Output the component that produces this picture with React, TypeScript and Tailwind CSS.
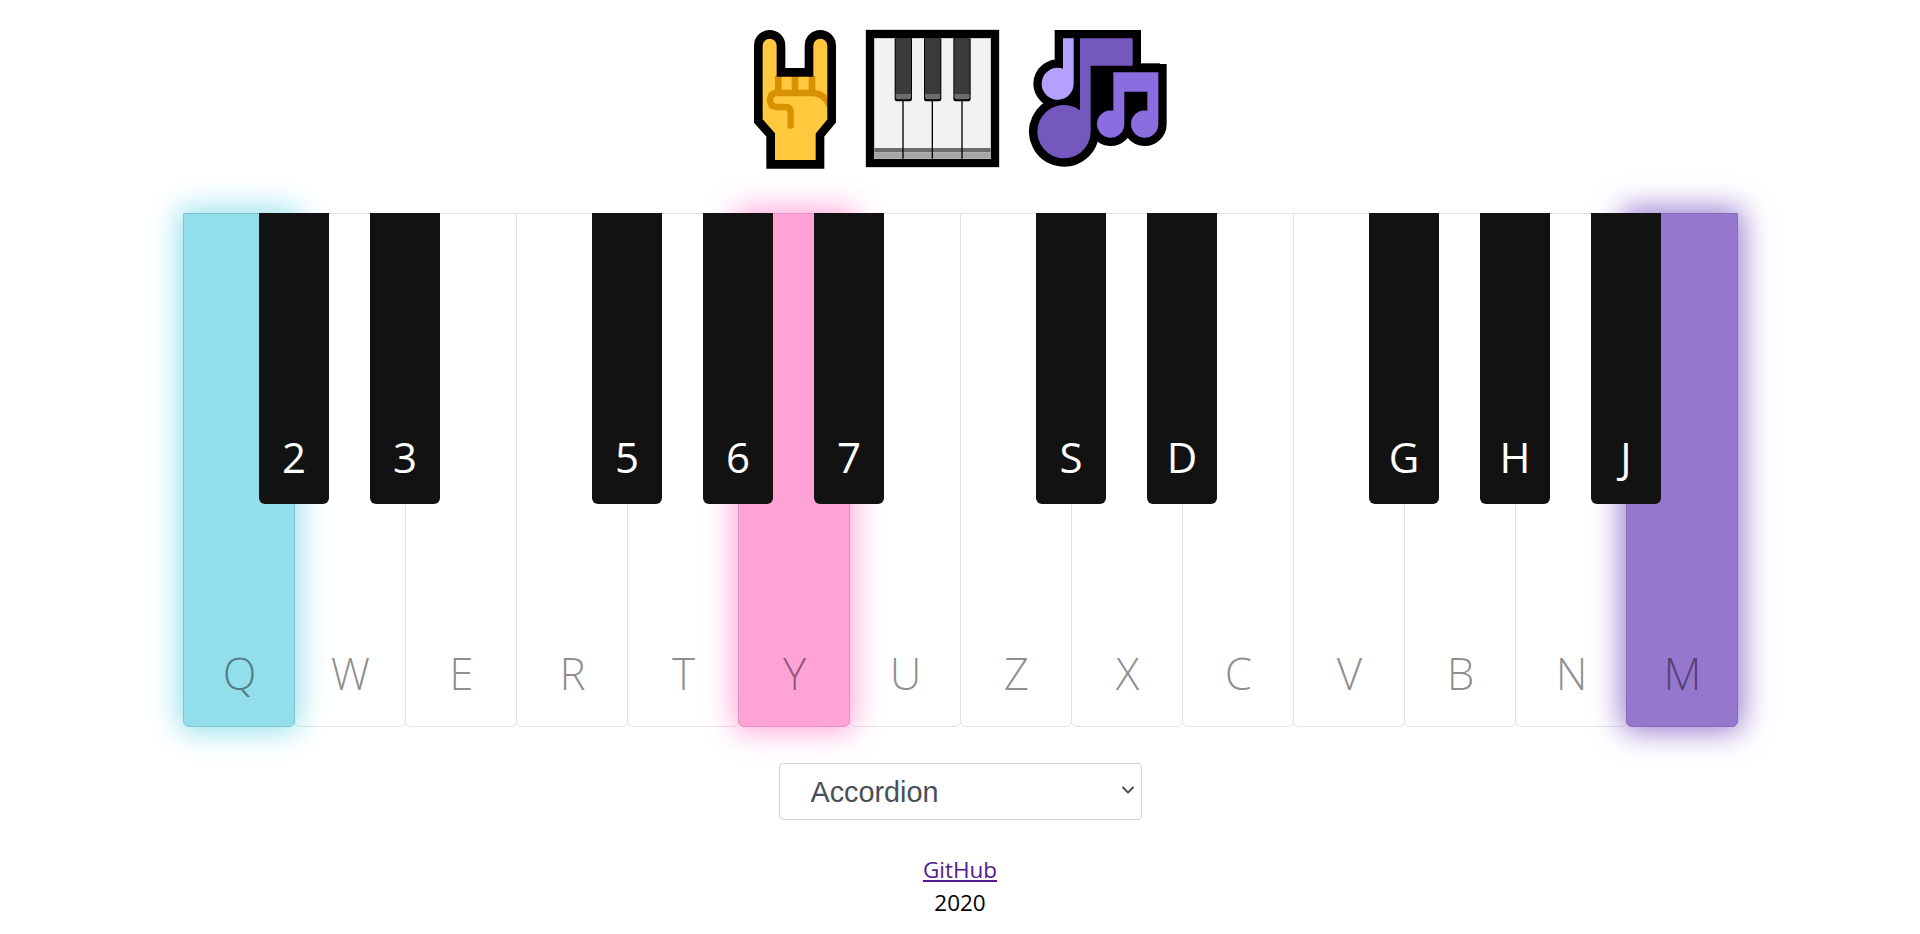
import React from 'react';
import { ChevronDown } from 'lucide-react';

interface PianoKey {
  label: string;
  sharp?: string;
  glow?: string;
}

const keys: PianoKey[] = [
  { label: 'Q', sharp: '2', glow: 'bg-[#92dfeb] border-[#7fc4d0] shadow-[0_0_30px_4px_#92dfeb] z-[1]' },
  { label: 'W', sharp: '3' },
  { label: 'E' },
  { label: 'R', sharp: '5' },
  { label: 'T', sharp: '6' },
  { label: 'Y', sharp: '7', glow: 'bg-[#ffa3d7] border-[#e591c1] shadow-[0_0_30px_4px_#ffa3d7] z-[1]' },
  { label: 'U' },
  { label: 'Z', sharp: 'S' },
  { label: 'X', sharp: 'D' },
  { label: 'C' },
  { label: 'V', sharp: 'G' },
  { label: 'B', sharp: 'H' },
  { label: 'N', sharp: 'J' },
  { label: 'M', glow: 'bg-[#9577ce] border-[#866bb9] shadow-[0_0_30px_4px_#9577ce] z-[1]' },
];

const handOutline = 'M62 418 V330 L25 288 V62 A34 34 0 0 1 93 62 V142 H177 V62 A34 34 0 0 1 245 62 V288 L210 330 V418 Z';

const HandIcon = () => (
  <svg viewBox="0 0 276 435" className="w-[92px] h-[145px]">
    <path d={handOutline} fill="#ffc83d" />
    <path d="M85 153 V204 M135 153 V204 M186 153 V204" stroke="#d89100" strokeWidth="20" fill="none" />
    <path
      d="M122 302 V262 Q122 246 106 246 H80 Q60 246 60 225 Q60 204 80 204 H192 Q225 208 238 240"
      stroke="#d89100"
      strokeWidth="19"
      strokeLinecap="round"
      fill="none"
    />
    <path d={handOutline} fill="none" stroke="#000" strokeWidth="26" />
  </svg>
);

const PianoIcon = () => (
  <svg viewBox="396 45 423 435" className="w-[141px] h-[145px]">
    <rect x="420" y="72" width="375" height="387" fill="#f2f2f2" stroke="#000" strokeWidth="25" />
    <rect x="433" y="414" width="349" height="13" fill="#6d6d6d" />
    <rect x="433" y="427" width="349" height="19" fill="#a6a6a6" />
    <path d="M519 270 V446 M607 270 V446 M696 270 V446" stroke="#000" strokeWidth="4" />
    {[494, 582, 670].map((x) => (
      <g key={x}>
        <path d={`M${x} 85 h52 v182 q0 7 -7 7 h-38 q-7 0 -7 -7 Z`} fill="#000" />
        <rect x={x + 3} y="85" width="46" height="167" fill="#3b3b3b" />
        <path d={`M${x + 3} 252 h46 v10 q0 6 -6 6 h-34 q-6 0 -6 -6 Z`} fill="#6d6d6d" />
      </g>
    ))}
  </svg>
);

const notePaths = [
  { d: 'M165 40 H323 V122 H197 V320 A80 80 0 1 1 165 256 Z', fill: '#7558be' },
  { d: 'M114 40 H146 V176 A48 48 0 1 1 114 131 Z', fill: '#b4a0ff' },
  { d: 'M265 142 H400 V297 A41 41 0 1 1 367 257 V200 H298 V297 A41 41 0 1 1 265 257 Z', fill: '#8b6de0' },
];

const NotesIcon = () => (
  <svg viewBox="0 0 441 435" className="w-[147px] h-[145px]">
    <rect x="190" y="115" width="215" height="175" fill="#000" />
    {notePaths.map((p) => (
      <path key={p.fill} d={p.d} fill="#000" stroke="#000" strokeWidth="50" strokeLinejoin="miter" />
    ))}
    {notePaths.map((p) => (
      <path key={p.fill} d={p.d} fill={p.fill} />
    ))}
  </svg>
);

const App: React.FC = () => {
  return (
    <div className="min-h-[934px] bg-white flex flex-col items-center overflow-hidden font-['Open_Sans',sans-serif]">
      <header className="flex justify-center gap-[20px] pt-[25px] pl-[2px]">
        <HandIcon />
        <PianoIcon />
        <div className="ml-[2px]">
          <NotesIcon />
        </div>
      </header>

      {/* keyboard */}
      <div className="flex mt-[43px]">
        {keys.map((k, i) => (
          <div
            key={k.label}
            className={`relative w-[112px] h-[514px] border rounded-b-[6px] flex items-end justify-center pl-[2px] pb-[23px] ${
              i > 0 ? '-ml-px' : ''
            } ${k.glow ?? 'border-[#e2e2e2]'}`}
          >
            <span className="text-[44px] leading-[60px] font-light text-black/45">{k.label}</span>
            {k.sharp && (
              <div className="absolute z-10 top-[-1px] left-[75px] w-[70px] h-[291px] bg-[#121212] rounded-b-[6px] flex items-end justify-center pl-[1px] pb-[20px]">
                <span className="text-[42px] leading-[54px] text-white">{k.sharp}</span>
              </div>
            )}
          </div>
        ))}
      </div>

      <div className="relative mt-[36px]">
        <select
          defaultValue="Accordion"
          className="block appearance-none w-[363px] h-[57px] pl-[31px] pr-[24px] pt-[3px] bg-white border border-[#ced4da] rounded-[4px] text-[28.8px] text-[#495057] font-['Liberation_Sans',sans-serif]"
        >
          <option>Accordion</option>
          <option>Piano</option>
          <option>Guitar</option>
        </select>
        <ChevronDown className="absolute right-[4px] top-[17px] w-[20px] h-[20px] text-[#495057] pointer-events-none" strokeWidth={2.4} />
      </div>

      <footer className="mt-[33px] text-center text-[22.5px] leading-[33px] text-black">
        <a href="#github" className="underline text-[#551a8b]">
          GitHub
        </a>
        <div>2020</div>
      </footer>
    </div>
  );
};

export default App;
